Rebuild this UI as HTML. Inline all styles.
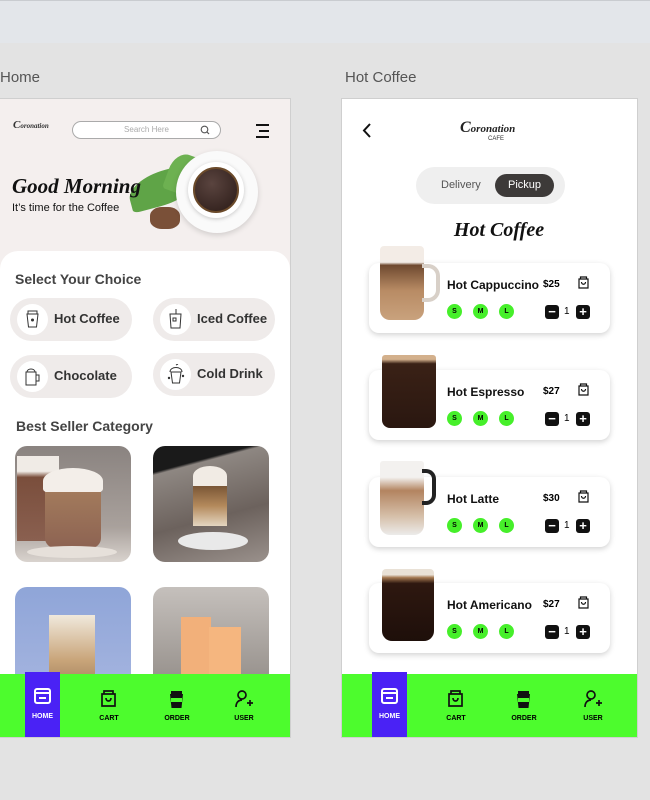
<!DOCTYPE html>
<html><head><meta charset="utf-8"><style>
*{margin:0;padding:0;box-sizing:border-box}
body{width:650px;height:800px;background:#e3e3e3;position:relative;overflow:hidden;font-family:"Liberation Sans",sans-serif}
.a{position:absolute}
.top{left:0;top:0;width:650px;height:43px;background:#e3e6ea;border-top:1px solid #c9ccd0}
.ttl{font-size:15px;color:#555;top:69px}
.phone{top:98px;height:640px;border:1px solid #cfcfcf;overflow:hidden}
.chip{background:#efebea;border-radius:22px;height:43px;width:122px}
.chip .ic{left:7px;top:6px;width:31px;height:31px;border-radius:50%;background:#fff}
.chip span{position:absolute;left:44px;top:13px;font-size:13px;font-weight:bold;color:#333}
.img{border-radius:12px;overflow:hidden}
.nav{left:0;width:100%;top:575px;height:64px;background:#4dfc2d}
.ni{width:40px;text-align:center;font-size:7px;font-weight:bold;top:0;height:64px}
.ni svg{position:absolute;left:11px;top:16px}
.ni b{position:absolute;left:0;width:40px;top:41px}
.hl{background:#4a22f5;color:#fff;top:-2px;height:70px}
.card{left:27px;width:241px;height:70px;background:#fff;border-radius:10px;box-shadow:0 2px 6px rgba(0,0,0,.18)}
.card .n{left:78px;top:15px;font-size:12px;font-weight:bold;color:#111}
.card .p{left:174px;top:16px;font-size:10px;font-weight:bold}
.sz{width:15px;height:15px;border-radius:50%;background:#46ef2a;font-size:7px;font-weight:bold;text-align:center;line-height:15px;top:41px}
.bx{width:14px;height:14px;background:#111;border-radius:3px;color:#fff;text-align:center;line-height:13px;font-size:13px;font-weight:bold;top:42px}
.script{font-family:"Liberation Serif",serif;font-style:italic;font-weight:bold}
</style></head><body>
<div class="a top"></div>
<div class="a ttl" style="left:0">Home</div>
<div class="a ttl" style="left:345px">Hot Coffee</div>

<!-- LEFT PHONE -->
<div class="a phone" style="left:-1px;width:292px;background:#f4efee">
  <div class="a script" style="left:13px;top:20px;font-size:11px;color:#333">C<span style="font-size:7px">oronation</span></div>
  <div class="a" style="left:72px;top:22px;width:149px;height:18px;border:1px solid #aaa;border-radius:10px;background:#fff;font-size:8px;color:#aaa;text-align:center;line-height:16px">Search Here
    <svg class="a" style="right:10px;top:3px" width="10" height="10" viewBox="0 0 10 10"><circle cx="4.5" cy="4.5" r="3.3" fill="none" stroke="#555" stroke-width="1.1"/><path d="M7 7l2 2" stroke="#555" stroke-width="1.2"/></svg></div>
  <div class="a" style="left:256px;top:25px;width:13px;height:2px;background:#111"></div>
  <div class="a" style="left:259px;top:31px;width:10px;height:2px;background:#111"></div>
  <div class="a" style="left:256px;top:37px;width:13px;height:2px;background:#111"></div>
  <div class="a" style="left:128px;top:72px;width:70px;height:34px;background:#5fa447;border-radius:60% 10% 60% 10%;transform:rotate(-15deg)"></div>
  <div class="a" style="left:168px;top:55px;width:30px;height:40px;background:#6db151;border-radius:50% 10% 50% 10%;transform:rotate(20deg)"></div>
  <div class="a" style="left:150px;top:108px;width:30px;height:22px;background:#7a5038;border-radius:40%"></div>
  <div class="a" style="left:176px;top:52px;width:82px;height:82px;border-radius:50%;background:#fafafa;box-shadow:0 2px 6px rgba(0,0,0,.15)"></div>
  <div class="a" style="left:188px;top:63px;width:56px;height:56px;border-radius:50%;background:#fff;box-shadow:0 1px 4px rgba(0,0,0,.2)"></div>
  <div class="a" style="left:193px;top:68px;width:46px;height:46px;border-radius:50%;background:radial-gradient(circle at 40% 35%,#5a443f,#2a1a16);border:2px solid #6b4a2a"></div>
  <div class="a script" style="left:12px;top:75px;font-size:21px;color:#111">Good Morning</div>
  <div class="a" style="left:12px;top:103px;font-size:11px;color:#111">It’s time for the Coffee</div>
  <div class="a" style="left:0;top:152px;width:290px;height:500px;background:#fff;border-radius:18px 18px 0 0">
    <div class="a" style="left:15px;top:20px;font-size:14px;font-weight:bold;color:#444">Select Your Choice</div>
    <div class="a chip" style="left:10px;top:47px"><div class="a ic"><svg class="a" style="left:9px;top:6px" width="13" height="18" viewBox="0 0 13 18"><path d="M1 4h11l-1.5 13h-8z M2 1h9v3H2z" fill="none" stroke="#333"/><circle cx="6.5" cy="10" r="1.5" fill="#333"/></svg></div><span>Hot Coffee</span></div>
    <div class="a chip" style="left:153px;top:47px"><div class="a ic"><svg class="a" style="left:9px;top:5px" width="13" height="20" viewBox="0 0 13 20"><path d="M1 5h11l-1 14H2z M7 5V0" fill="none" stroke="#333"/><rect x="4" y="9" width="3" height="3" fill="none" stroke="#333"/></svg></div><span>Iced Coffee</span></div>
    <div class="a chip" style="left:10px;top:104px"><div class="a ic"><svg class="a" style="left:8px;top:6px" width="16" height="19" viewBox="0 0 16 19"><path d="M1 5h10v13H1z M11 8h3v6h-3 M2 5c0-4 8-4 8 0" fill="none" stroke="#333"/></svg></div><span>Chocolate</span></div>
    <div class="a chip" style="left:153px;top:102px"><div class="a ic"><svg class="a" style="left:7px;top:5px" width="18" height="20" viewBox="0 0 18 20"><path d="M4 8h10l-1.5 11h-7z M3 8c0-6 12-6 12 0 M9 1l2-1" fill="none" stroke="#333"/><circle cx="2" cy="14" r="1.2" fill="#333"/><circle cx="16" cy="12" r="1.2" fill="#333"/></svg></div><span>Cold Drink</span></div>
    <div class="a" style="left:16px;top:167px;font-size:14px;font-weight:bold;color:#444">Best Seller Category</div>
    <div class="a img" style="left:15px;top:195px;width:116px;height:116px;background:linear-gradient(#8a8380,#a9a19c 70%,#d9d3ce)">
      <div class="a" style="left:2px;top:10px;width:42px;height:85px;background:linear-gradient(#f0ebe6 0 18%,#7a4e3c 25%,#8a6050)"></div>
      <div class="a" style="left:28px;top:22px;width:60px;height:26px;background:#f3eee9;border-radius:50% 50% 20% 20%"></div>
      <div class="a" style="left:30px;top:46px;width:56px;height:56px;background:linear-gradient(#a27a5c,#8d6352);border-radius:0 0 10px 10px"></div>
      <div class="a" style="left:12px;top:100px;width:90px;height:12px;background:#e6e0da;border-radius:50%"></div></div>
    <div class="a img" style="left:153px;top:195px;width:116px;height:116px;background:linear-gradient(165deg,#1a1a1a 0%,#1a1a1a 18%,#8e8782 20%,#6c625d 60%,#9a918c 100%)">
      <div class="a" style="left:40px;top:20px;width:34px;height:20px;background:#f1ebe4;border-radius:50% 50% 0 0"></div>
      <div class="a" style="left:40px;top:40px;width:34px;height:40px;background:linear-gradient(#7a5636,#b48a5c,#e4d6c0)"></div>
      <div class="a" style="left:25px;top:86px;width:70px;height:18px;background:#e9e9e9;border-radius:50%"></div></div>
    <div class="a img" style="left:15px;top:336px;width:116px;height:116px;background:linear-gradient(#8fa5d8,#a7b6e0)">
      <div class="a" style="left:34px;top:28px;width:46px;height:90px;background:linear-gradient(#f0e9dc,#c9a57a 50%,#8a6b4c)"></div></div>
    <div class="a img" style="left:153px;top:336px;width:116px;height:116px;background:linear-gradient(#c5c0bc,#8c8681)">
      <div class="a" style="left:28px;top:30px;width:30px;height:80px;background:#f2b07a"></div>
      <div class="a" style="left:56px;top:40px;width:32px;height:70px;background:#f5b67f"></div></div>
  </div>
  <div class="a nav">
    <div class="a ni hl" style="left:25px;width:35px"><svg style="left:9px" width="17" height="16" viewBox="0 0 17 16"><rect x="1" y="1" width="15" height="14" rx="2" fill="none" stroke="#fff" stroke-width="2"/><path d="M1 5h15" stroke="#fff" stroke-width="2"/><rect x="5" y="9" width="7" height="2" fill="#fff"/></svg><b style="width:35px;color:#fff">HOME</b></div>
    <div class="a ni" style="left:89px"><svg width="17" height="17" viewBox="0 0 17 17"><path d="M2 4h13v12H2z M4 4V1h9v3 M6 8c0 4 5 4 5 0" fill="none" stroke="#111" stroke-width="1.7"/></svg><b>CART</b></div>
    <div class="a ni" style="left:157px"><svg width="17" height="19" viewBox="0 0 17 19"><path d="M3 1h11v3H3z M2 4h13l-1.5 14h-10z" fill="#111"/><rect x="3" y="8" width="11" height="4" fill="#4dfc2d"/></svg><b>ORDER</b></div>
    <div class="a ni" style="left:224px"><svg width="18" height="18" viewBox="0 0 18 18"><circle cx="7" cy="5" r="4" fill="none" stroke="#111" stroke-width="1.7"/><path d="M1 17c0-5 3-7 6-7 M12 13h6M15 10v6" fill="none" stroke="#111" stroke-width="1.7"/></svg><b>USER</b></div>
  </div>
</div>

<!-- RIGHT PHONE -->
<div class="a phone" style="left:341px;width:297px;background:#fff">
  <svg class="a" style="left:20px;top:24px" width="10" height="15" viewBox="0 0 10 15"><path d="M8 1L2 7.5 8 14" fill="none" stroke="#111" stroke-width="2"/></svg>
  <div class="a script" style="left:118px;top:20px;font-size:16px;color:#222">C<span style="font-size:11px">oronation</span></div>
  <div class="a" style="left:146px;top:37px;font-size:6px;color:#333">CAFE</div>
  <div class="a" style="left:74px;top:68px;width:149px;height:37px;background:#efefef;border-radius:19px"></div>
  <div class="a" style="left:99px;top:80px;font-size:11px;color:#555">Delivery</div>
  <div class="a" style="left:153px;top:75px;width:59px;height:23px;background:#3d3a39;border-radius:12px;color:#fff;font-size:11px;text-align:center;line-height:23px">Pickup</div>
  <div class="a script" style="left:0;width:297px;text-align:center;top:120px;font-size:20px;color:#111;padding-left:17px">Hot Coffee</div>

  <div class="a card" style="top:164px"><div class="a n">Hot Cappuccino</div><div class="a p">$25</div></div>
  <div class="a card" style="top:271px"><div class="a n">Hot Espresso</div><div class="a p">$27</div></div>
  <div class="a card" style="top:378px"><div class="a n">Hot Latte</div><div class="a p">$30</div></div>
  <div class="a card" style="top:484px"><div class="a n">Hot Americano</div><div class="a p">$27</div></div>

  <div class="a" style="left:38px;top:147px;width:44px;height:74px;border-radius:4px 4px 10px 10px;background:linear-gradient(#f3ece6 0 22%,#6f4a30 26%,#b88b64 60%,#c9a27d)"></div>
  <div class="a" style="left:80px;top:165px;width:18px;height:38px;border:4px solid #d8d0c8;border-left:none;border-radius:0 12px 12px 0"></div>
  <div class="a" style="left:40px;top:256px;width:54px;height:73px;border-radius:3px 3px 8px 8px;background:linear-gradient(#d3b08c 0 6%,#3a2116 12%,#2a1710)"></div>
  <div class="a" style="left:38px;top:362px;width:44px;height:74px;border-radius:3px 3px 10px 10px;background:linear-gradient(#f3f1ef 0 22%,#b38460 40%,#d6c0aa 75%,#ecebea)"></div>
  <div class="a" style="left:80px;top:370px;width:14px;height:36px;border:4px solid #222;border-left:none;border-radius:0 10px 10px 0"></div>
  <div class="a" style="left:40px;top:470px;width:52px;height:72px;border-radius:4px 4px 10px 10px;background:linear-gradient(#e9e1d6 0 8%,#a47850 12%,#2e1810 20%,#1e0f0a)"></div>

  <div class="a" style="left:0;top:164px">
    <div class="a sz" style="left:105px">S</div><div class="a sz" style="left:131px">M</div><div class="a sz" style="left:157px">L</div>
    <div class="a bx" style="left:203px">−</div><div class="a" style="left:222px;top:43px;font-size:10px">1</div><div class="a bx" style="left:234px">+</div>
    <svg class="a" style="left:236px;top:13px" width="11" height="13" viewBox="0 0 11 13"><path d="M1 3h9v9H1z M2.5 3V1h6v2 M3.5 6c0 3 4 3 4 0" fill="none" stroke="#111" stroke-width="1.2"/></svg>
  </div>
  <div class="a" style="left:0;top:271px">
    <div class="a sz" style="left:105px">S</div><div class="a sz" style="left:131px">M</div><div class="a sz" style="left:157px">L</div>
    <div class="a bx" style="left:203px">−</div><div class="a" style="left:222px;top:43px;font-size:10px">1</div><div class="a bx" style="left:234px">+</div>
    <svg class="a" style="left:236px;top:13px" width="11" height="13" viewBox="0 0 11 13"><path d="M1 3h9v9H1z M2.5 3V1h6v2 M3.5 6c0 3 4 3 4 0" fill="none" stroke="#111" stroke-width="1.2"/></svg>
  </div>
  <div class="a" style="left:0;top:378px">
    <div class="a sz" style="left:105px">S</div><div class="a sz" style="left:131px">M</div><div class="a sz" style="left:157px">L</div>
    <div class="a bx" style="left:203px">−</div><div class="a" style="left:222px;top:43px;font-size:10px">1</div><div class="a bx" style="left:234px">+</div>
    <svg class="a" style="left:236px;top:13px" width="11" height="13" viewBox="0 0 11 13"><path d="M1 3h9v9H1z M2.5 3V1h6v2 M3.5 6c0 3 4 3 4 0" fill="none" stroke="#111" stroke-width="1.2"/></svg>
  </div>
  <div class="a" style="left:0;top:484px">
    <div class="a sz" style="left:105px">S</div><div class="a sz" style="left:131px">M</div><div class="a sz" style="left:157px">L</div>
    <div class="a bx" style="left:203px">−</div><div class="a" style="left:222px;top:43px;font-size:10px">1</div><div class="a bx" style="left:234px">+</div>
    <svg class="a" style="left:236px;top:13px" width="11" height="13" viewBox="0 0 11 13"><path d="M1 3h9v9H1z M2.5 3V1h6v2 M3.5 6c0 3 4 3 4 0" fill="none" stroke="#111" stroke-width="1.2"/></svg>
  </div>

  <div class="a nav">
    <div class="a ni hl" style="left:30px;width:35px"><svg style="left:9px" width="17" height="16" viewBox="0 0 17 16"><rect x="1" y="1" width="15" height="14" rx="2" fill="none" stroke="#fff" stroke-width="2"/><path d="M1 5h15" stroke="#fff" stroke-width="2"/><rect x="5" y="9" width="7" height="2" fill="#fff"/></svg><b style="width:35px;color:#fff">HOME</b></div>
    <div class="a ni" style="left:94px"><svg width="17" height="17" viewBox="0 0 17 17"><path d="M2 4h13v12H2z M4 4V1h9v3 M6 8c0 4 5 4 5 0" fill="none" stroke="#111" stroke-width="1.7"/></svg><b>CART</b></div>
    <div class="a ni" style="left:162px"><svg width="17" height="19" viewBox="0 0 17 19"><path d="M3 1h11v3H3z M2 4h13l-1.5 14h-10z" fill="#111"/><rect x="3" y="8" width="11" height="4" fill="#4dfc2d"/></svg><b>ORDER</b></div>
    <div class="a ni" style="left:231px"><svg width="18" height="18" viewBox="0 0 18 18"><circle cx="7" cy="5" r="4" fill="none" stroke="#111" stroke-width="1.7"/><path d="M1 17c0-5 3-7 6-7 M12 13h6M15 10v6" fill="none" stroke="#111" stroke-width="1.7"/></svg><b>USER</b></div>
  </div>
</div>
</body></html>
